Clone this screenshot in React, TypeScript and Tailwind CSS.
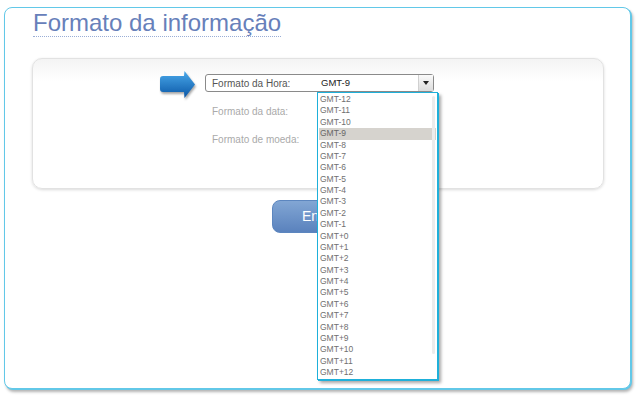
import React from "react";

const zones = [
  "GMT-12", "GMT-11", "GMT-10", "GMT-9", "GMT-8", "GMT-7", "GMT-6", "GMT-5", "GMT-4",
  "GMT-3", "GMT-2", "GMT-1", "GMT+0", "GMT+1", "GMT+2", "GMT+3", "GMT+4", "GMT+5",
  "GMT+6", "GMT+7", "GMT+8", "GMT+9", "GMT+10", "GMT+11", "GMT+12",
];

function Arrow() {
  return (
    <svg width="36" height="30" viewBox="0 0 36 30" className="shrink-0 drop-shadow-[1px_2px_1px_rgba(0,0,0,0.35)]">
      <defs>
        <linearGradient id="arr" x1="0" y1="0" x2="0" y2="1">
          <stop offset="0" stopColor="#4aa9ea" />
          <stop offset="1" stopColor="#0a56a6" />
        </linearGradient>
      </defs>
      <path d="M1 9 Q1 6 4 6 L25 6 L25.5 1 L36 14.5 L25.5 28 L25 22 L4 22 Q1 22 1 19 Z" fill="url(#arr)" />
    </svg>
  );
}

export default function App() {
  return (
    <div className="h-[411px] w-[640px] bg-white pl-[4px] pt-[7px] font-['Liberation_Sans',Arial,sans-serif]">
      {/* cartão externo */}
      <div className="h-[382px] w-[627px] rounded-[8px] border border-[#62c8e8] bg-white pt-[1px] shadow-[1px_1px_0_#62c8e8,2px_3px_3px_rgba(0,0,0,0.3)]">
        <div className="pl-[28px]">
          <h1 className="inline-block border-b border-dotted border-[#9aaed6] text-[24px] leading-[27px] text-[#6780ba]">
            Formato da informação
          </h1>
        </div>

        {/* painel de opções */}
        <div className="ml-[27px] mt-[20px] h-[131px] w-[572px] rounded-[10px] border border-[#e2e2e2] bg-gradient-to-b from-[#f4f4f4] to-white to-[22px] pl-[126px] pt-[10px] shadow-[0_1px_3px_rgba(0,0,0,0.15)]">
          <div className="flex h-[28px] items-center gap-[10px]">
            <div className="mt-[4px]">
              <Arrow />
            </div>
            <div className="relative flex h-[18px] w-[229px] items-center rounded-[3px] border border-[#8a8a8a] bg-white">
              <span className="w-[112px] pl-[6px] text-[10px] text-[#555]">Formato da Hora:</span>
              <span className="flex-1 pl-[3px] text-[9.5px] text-[#222]">GMT-9</span>
              <span className="flex h-full w-[15px] items-center justify-center border-l border-[#d0d0d0] bg-gradient-to-b from-[#fafafa] to-[#dcdcdc]">
                <svg width="6" height="4" viewBox="0 0 6 4">
                  <path d="M0 0 L6 0 L3 4 Z" fill="#222" />
                </svg>
              </span>

              {/* lista aberta */}
              <div className="absolute left-[111px] top-[17px] z-10 h-[288px] w-[121px] border border-[#1eb0da] bg-white pl-[1px] pr-[1px] pt-[1px] shadow-[1px_1px_0_#1eb0da,3px_3px_3px_rgba(0,0,0,0.35)]">
                <div className="absolute right-[2px] top-[3px] h-[258px] w-[3px] rounded-full bg-[#ececec]" />
                {zones.map((z) => (
                  <div
                    key={z}
                    className={
                      z === "GMT-9"
                        ? "h-[11.375px] bg-[#d6d3ce] pl-[1px] text-[8.5px] leading-[11.375px] text-[#666]"
                        : "h-[11.375px] pl-[1px] text-[8.5px] leading-[11.375px] text-[#707070]"
                    }
                  >
                    {z}
                  </div>
                ))}
              </div>
            </div>
          </div>
          <div className="flex h-[28px] items-center pl-[53px] text-[10px] text-[#aaa]">Formato da data:</div>
          <div className="flex h-[28px] items-center pl-[53px] text-[10px] text-[#aaa]">Formato de moeda:</div>
        </div>

        <div className="mt-[11px] pl-[267px]">
          <button className="h-[33px] w-[96px] rounded-[8px] border border-[#5c86bf] bg-gradient-to-b from-[#82a6d4] to-[#5a82bd] pl-[29px] text-left text-[14px] text-white">
            Enviar
          </button>
        </div>
      </div>
    </div>
  );
}
